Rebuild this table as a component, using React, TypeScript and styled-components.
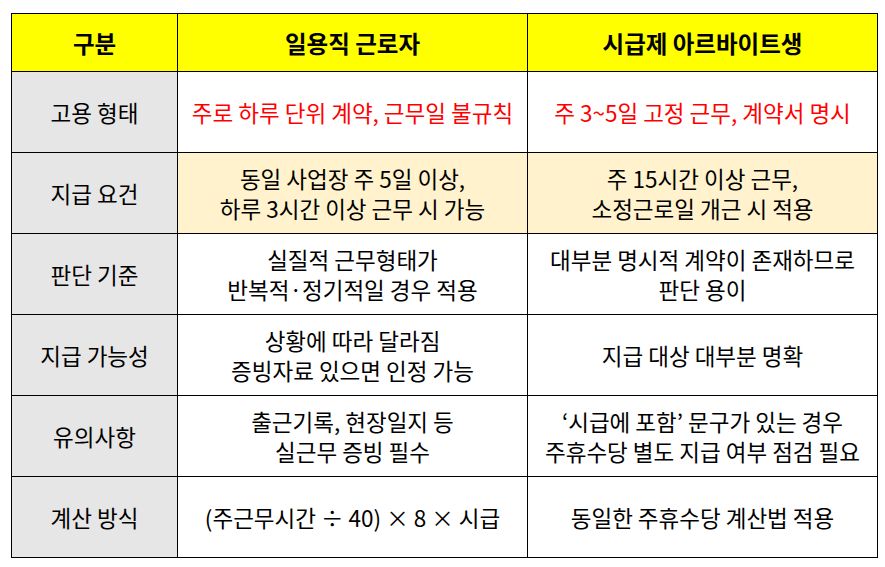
import React from "react";
import styled, { createGlobalStyle } from "styled-components";

const Global = createGlobalStyle`
  html, body { margin: 0; padding: 0; background: #ffffff; }
  body { font-family: "Noto Sans CJK KR", "Noto Sans", sans-serif; }
`;

const Page = styled.div`
  padding: 13px 0 0 11px;
`;

const Table = styled.table`
  border-collapse: collapse;
  table-layout: fixed;
  width: 866px;
  font-family: "Noto Sans CJK KR", "Noto Sans", sans-serif;
  font-size: 22.5px;
  color: #000;
`;

const HeadCell = styled.th`
  background: #ffff00;
  border: 1px solid #000;
  height: 57px;
  padding: 0;
  font-size: 23.5px;
  font-weight: 700;
  text-align: center;
  vertical-align: middle;
`;

const LabelCell = styled.td`
  background: #e7e6e6;
  border: 1px solid #000;
  height: 80px;
  padding: 0;
  text-align: center;
  vertical-align: middle;
  line-height: 30px;
`;

const Cell = styled.td<{ $tone?: "red" | "yellow" }>`
  background: ${(p) => (p.$tone === "yellow" ? "#fff2cc" : "#ffffff")};
  color: ${(p) => (p.$tone === "red" ? "#ff0000" : "#000000")};
  border: 1px solid #000;
  height: 80px;
  padding: 0;
  text-align: center;
  vertical-align: middle;
  line-height: 30px;
  white-space: nowrap;
`;

type Row = { label: string; a: string[]; b: string[]; tone?: "red" | "yellow"; toneB?: "red" | "yellow" };

const rows: Row[] = [
  { label: "고용 형태", a: ["주로 하루 단위 계약, 근무일 불규칙"], b: ["주 3~5일 고정 근무, 계약서 명시"], tone: "red", toneB: "red" },
  { label: "지급 요건", a: ["동일 사업장 주 5일 이상,", "하루 3시간 이상 근무 시 가능"], b: ["주 15시간 이상 근무,", "소정근로일 개근 시 적용"], tone: "yellow", toneB: "yellow" },
  { label: "판단 기준", a: ["실질적 근무형태가", "반복적·정기적일 경우 적용"], b: ["대부분 명시적 계약이 존재하므로", "판단 용이"] },
  { label: "지급 가능성", a: ["상황에 따라 달라짐", "증빙자료 있으면 인정 가능"], b: ["지급 대상 대부분 명확"] },
  { label: "유의사항", a: ["출근기록, 현장일지 등", "실근무 증빙 필수"], b: ["‘시급에 포함’ 문구가 있는 경우", "주휴수당 별도 지급 여부 점검 필요"] },
  { label: "계산 방식", a: ["(주근무시간 ÷ 40) × 8 × 시급"], b: ["동일한 주휴수당 계산법 적용"] },
];

const Lines = ({ lines }: { lines: string[] }) => (
  <>
    {lines.map((l, i) => (
      <React.Fragment key={i}>
        {i > 0 && <br />}
        {l}
      </React.Fragment>
    ))}
  </>
);

export default function App() {
  return (
    <>
      <Global />
      <Page>
        <Table>
          <colgroup>
            <col style={{ width: 166 }} />
            <col style={{ width: 350 }} />
            <col style={{ width: 350 }} />
          </colgroup>
          <thead>
            <tr>
              <HeadCell>구분</HeadCell>
              <HeadCell>일용직 근로자</HeadCell>
              <HeadCell>시급제 아르바이트생</HeadCell>
            </tr>
          </thead>
          <tbody>
            {rows.map((r) => (
              <tr key={r.label}>
                <LabelCell>{r.label}</LabelCell>
                <Cell $tone={r.tone}>
                  <Lines lines={r.a} />
                </Cell>
                <Cell $tone={r.toneB}>
                  <Lines lines={r.b} />
                </Cell>
              </tr>
            ))}
          </tbody>
        </Table>
      </Page>
    </>
  );
}
